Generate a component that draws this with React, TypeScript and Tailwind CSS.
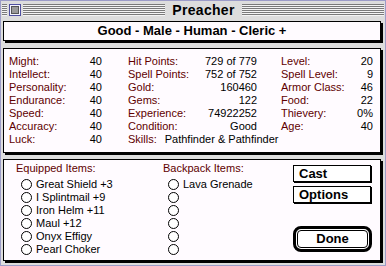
const stripes =
  "bg-[repeating-linear-gradient(to_bottom,#7a7a7a_0px,#7a7a7a_1px,#f4f4f4_1px,#f4f4f4_2px)]";

const col1 = [
  ["Might:", "40"],
  ["Intellect:", "40"],
  ["Personality:", "40"],
  ["Endurance:", "40"],
  ["Speed:", "40"],
  ["Accuracy:", "40"],
  ["Luck:", "40"],
];

const col2 = [
  ["Hit Points:", "729 of 779"],
  ["Spell Points:", "752 of 752"],
  ["Gold:", "160460"],
  ["Gems:", "122"],
  ["Experience:", "74922252"],
  ["Condition:", "Good"],
];

const col3 = [
  ["Level:", "20"],
  ["Spell Level:", "9"],
  ["Armor Class:", "46"],
  ["Food:", "22"],
  ["Thievery:", "0%"],
  ["Age:", "40"],
];

const equipped = ["Great Shield +3", "I Splintmail +9", "Iron Helm +11", "Maul +12", "Onyx Effigy", "Pearl Choker"];
const backpack = ["Lava Grenade", "", "", "", "", ""];

function StatColumn({ rows, width }: { rows: string[][]; width: string }) {
  return (
    <div className={`flex flex-col ${width}`}>
      {rows.map(([label, value]) => (
        <div key={label} className="flex justify-between h-[13px] leading-[13px]">
          <span className="text-[#600000]">{label}</span>
          <span className="text-black">{value}</span>
        </div>
      ))}
    </div>
  );
}

function ItemList({ title, items }: { title: string; items: string[] }) {
  return (
    <div className="flex flex-col">
      <div className="h-[13px] leading-[13px] text-[#600000] mb-[3px]">{title}</div>
      {items.map((item, i) => (
        <div key={i} className="flex items-center gap-[4px] h-[13px] pl-[5px]">
          <span className="w-[11px] h-[11px] rounded-full border border-black bg-white shrink-0" />
          <span className="leading-[13px] whitespace-nowrap">{item}</span>
        </div>
      ))}
    </div>
  );
}

export default function App() {
  return (
    <div className="w-[386px] h-[266px] bg-[#dddddd] border border-[#9c9cc8] flex flex-col font-['Liberation_Sans',Arial,sans-serif] text-[11px] text-black overflow-hidden">
      {/* Title bar */}
      <div className="h-[18px] flex items-center pl-[1px] pr-[1px] gap-[2px] shrink-0">
        <div className={`w-[5px] h-[12px] ${stripes}`} />
        <div className="w-[12px] h-[12px] border border-[#5050a0] bg-[#f4f4ff] p-[1px] shrink-0">
          <div className="w-full h-full bg-[#9a9a9a] border border-[#555]" />
        </div>
        <div className={`flex-1 h-[12px] ${stripes}`} />
        <div className="px-[5px] text-[14px] font-bold leading-[16px] tracking-[0.3px]">Preacher</div>
        <div className={`flex-1 h-[12px] ${stripes}`} />
      </div>

      <div className="flex flex-col pl-[2px] pt-[2px]">
        {/* Summary */}
        <div className="w-[378px] h-[20px] bg-[#fffbff] border border-black shadow-[2px_2px_0_#000] flex items-center justify-center text-[13px] font-bold">
          Good - Male - Human - Cleric +
        </div>

        {/* Stats */}
        <div className="mt-[7px] w-[378px] h-[105px] bg-[#fffbff] border border-black shadow-[2px_2px_0_#000] flex pl-[5px] pt-[6px]">
          <StatColumn rows={col1} width="w-[93px]" />
          <div className="flex flex-col w-[129px] ml-[26px]">
            {col2.map(([label, value]) => (
              <div key={label} className="flex justify-between h-[13px] leading-[13px]">
                <span className="text-[#600000]">{label}</span>
                <span>{value}</span>
              </div>
            ))}
            <div className="flex h-[13px] leading-[13px] whitespace-nowrap">
              <span className="text-[#600000]">Skills:</span>
              <span className="ml-[8px]">Pathfinder &amp; Pathfinder</span>
            </div>
          </div>
          <div className="ml-[24px]">
            <StatColumn rows={col3} width="w-[92px]" />
          </div>
        </div>

        {/* Items */}
        <div className="mt-[6px] w-[378px] h-[102px] bg-[#fffbff] border border-black shadow-[2px_2px_0_#000] flex pl-[12px]">
          <div className="w-[147px] pt-[2px]">
            <ItemList title="Equipped Items:" items={equipped} />
          </div>
          <div className="w-[130px] pt-[2px]">
            <ItemList title="Backpack Items:" items={backpack} />
          </div>
          <div className="w-[79px] pt-[5px] flex flex-col">
            <button className="h-[17px] w-[78px] border border-black bg-white shadow-[1px_1px_0_#000] text-left pl-[5px] text-[13px] font-bold leading-[15px]">
              Cast
            </button>
            <button className="mt-[4px] h-[17px] w-[78px] border border-black bg-white shadow-[1px_1px_0_#000] text-left pl-[5px] text-[13px] font-bold leading-[15px]">
              Options
            </button>
            <div className="mt-[23px] h-[26px] w-[79px] border-[3px] border-black rounded-[8px] p-[1px] bg-white">
              <button className="w-full h-full border border-black rounded-[4px] text-[13px] font-bold leading-[14px]">
                Done
              </button>
            </div>
          </div>
        </div>
      </div>
    </div>
  );
}
